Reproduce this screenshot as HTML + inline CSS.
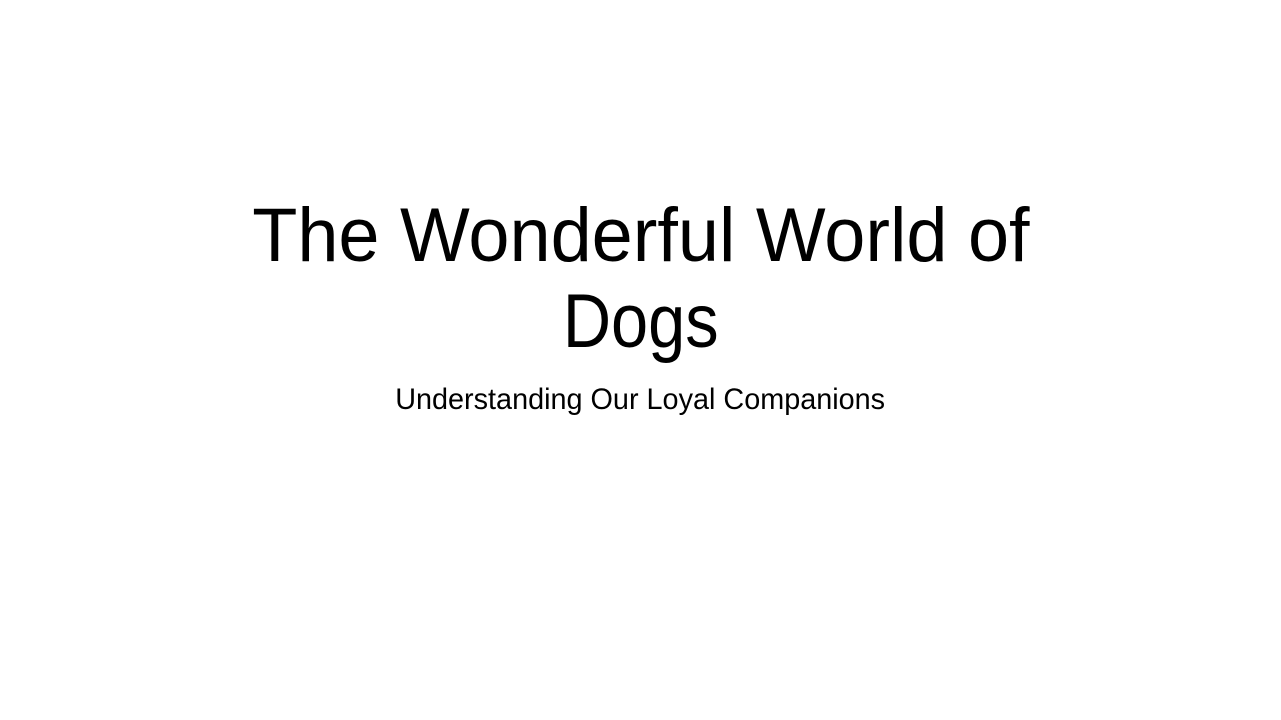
<!DOCTYPE html>
<html><head><meta charset="utf-8"><style>
html,body{margin:0;padding:0;background:#fff;width:1281px;height:720px;overflow:hidden;position:relative;font-family:"Liberation Sans",sans-serif;color:#000}
.l{position:absolute;left:0;width:1281px;text-align:center;line-height:1;white-space:nowrap}
.l span{display:inline-block;transform-origin:center}
</style></head><body>
<div class="l" style="top:198px;font-size:76px;font-weight:300"><span style="transform:scaleX(0.972)">The Wonderful World of</span></div>
<div class="l" style="top:284px;font-size:76px;font-weight:300"><span style="transform:scaleX(0.878)">Dogs</span></div>
<div class="l" style="top:385px;font-size:30px"><span style="transform:scaleX(0.96)">Understanding Our Loyal Companions</span></div>
</body></html>
